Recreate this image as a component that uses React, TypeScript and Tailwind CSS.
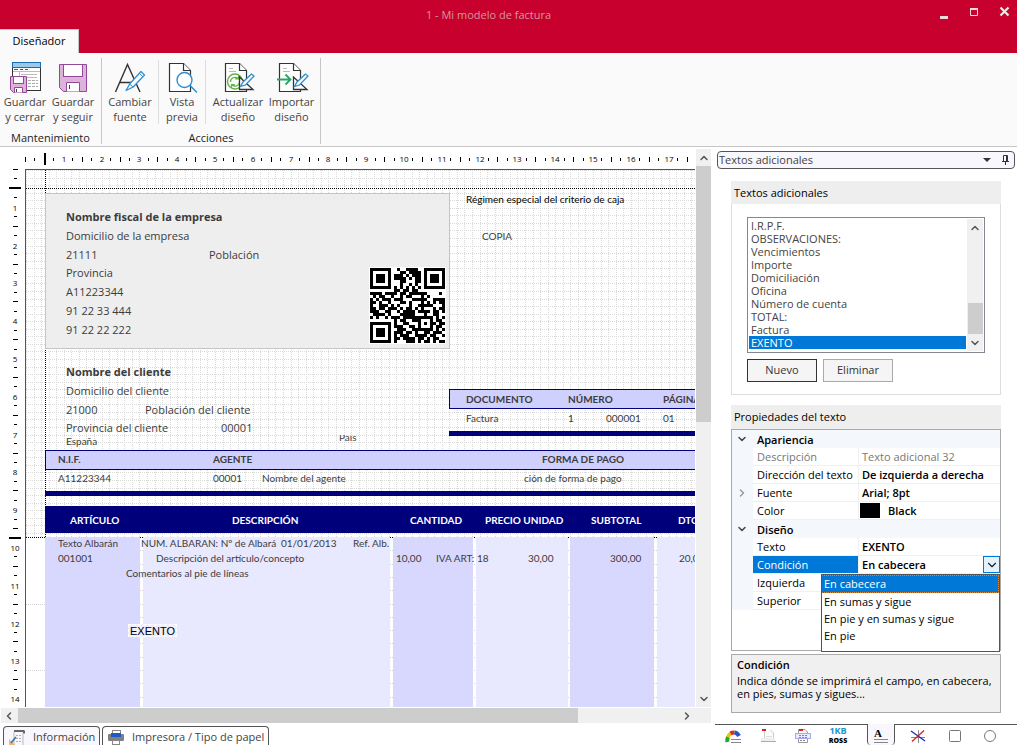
import React, { useState } from "react";
import { ChevronDown, ChevronLeft, ChevronRight, ChevronUp } from "lucide-react";

const CM = 37.8;

/* ---------- Ribbon icons ---------- */

function Pencil() {
  return (
    <g>
      <path d="M28 11.500 17 23.500l-4 7 7.200-3.500L31.500 15z" fill="#fafafa" stroke="#2f8fd0" strokeWidth="1.300" strokeLinejoin="round" />
      <path d="M26.500 13.500 30 17M16.500 24l3.500 3" stroke="#2f8fd0" strokeWidth="1" />
    </g>
  );
}

function SaveCloseIcon() {
  return (
    <svg width="34" height="34" viewBox="0 0 34 34" fill="none">
      <rect x="4.500" y="2.500" width="28" height="28" fill="#fff" stroke="#333" />
      <rect x="4.500" y="2.500" width="28" height="5" fill="#9cc9ea" stroke="#1b6db0" />
      <path d="M6 9.500h4M12 9.500h3M17 9.500h3" stroke="#555" />
      <path d="M5 11.500h27M11.500 12v18M13 14.500h16M13 17.500h16" stroke="#bbb" />
      <path d="M20 20.500h3M24 20.500h3M28 20.500h2M20 23.500h3M24 23.500h3M28 23.500h2M20 26.500h3M24 26.500h3M28 26.500h2" stroke="#aaa" />
      <path d="M2.500 16.500h16v16h-13l-3-3z" fill="#dcb4da" stroke="#96479a" />
      <rect x="5.500" y="16.500" width="10" height="7" fill="#fff" stroke="#96479a" />
      <path d="M6.500 32.500v-5h8v5" fill="#fff" stroke="#96479a" />
      <path d="M8.500 29v3" stroke="#444" />
    </svg>
  );
}

function SaveIcon() {
  return (
    <svg width="34" height="34" viewBox="0 0 34 34" fill="none">
      <path d="M3.500 4.500h27v27h-23l-4-4z" fill="#dcb4da" stroke="#96479a" />
      <rect x="7.500" y="4.500" width="19" height="12" fill="#fff" stroke="#96479a" />
      <path d="M10.500 31.500v-9h13v9" fill="#fff" stroke="#96479a" />
      <path d="M13.500 25v4" stroke="#444" />
    </svg>
  );
}

function FontIcon() {
  return (
    <svg width="34" height="34" viewBox="0 0 34 34" fill="none">
      <path d="M2.500 32 14.500 4.500 27 32M7 22.500h15" stroke="#333" strokeWidth="1.400" />
      <Pencil />
    </svg>
  );
}

function PageShape() {
  return (
    <g>
      <path d="M4.500 3.500h14l7 7v21h-21z" fill="#fff" stroke="#333" strokeWidth="1.200" />
      <path d="M18.500 3.500v7h7" fill="#fff" stroke="#333" strokeWidth="1.200" />
    </g>
  );
}

function PreviewIcon() {
  return (
    <svg width="34" height="34" viewBox="0 0 34 34" fill="none">
      <PageShape />
      <circle cx="19.500" cy="20" r="7.500" fill="#fff" stroke="#2f8fd0" strokeWidth="1.400" />
      <path d="M25 25.500 32 32.500" stroke="#2f8fd0" strokeWidth="1.500" />
    </svg>
  );
}

function SetSquare() {
  return (
    <g>
      <path d="M18.500 17v12.500h13.500z" fill="#fff" stroke="#333" strokeWidth="1.300" />
      <path d="M30.500 14 22 22l-2.500 4.500 5-1.500 8.500-9z" fill="#fafafa" stroke="#2f8fd0" strokeWidth="1.300" />
    </g>
  );
}

function UpdateIcon() {
  return (
    <svg width="34" height="34" viewBox="0 0 34 34" fill="none">
      <PageShape />
      <path d="M8 8.500h4M8 11.500h7" stroke="#bbb" />
      <circle cx="14" cy="21.500" r="7.500" fill="#fff" stroke="#62b345" strokeWidth="1.400" />
      <path d="M9.500 22a4.500 4.500 0 0 1 7.500-3.500M17.500 15.500v3.300h-3.300M18.500 21.500a4.500 4.500 0 0 1-7.500 3.500M10.500 28v-3.300h3.300" stroke="#62b345" strokeWidth="1.200" />
      <SetSquare />
    </svg>
  );
}

function ImportIcon() {
  return (
    <svg width="34" height="34" viewBox="0 0 34 34" fill="none">
      <PageShape />
      <path d="M8 8.500h4M8 11.500h7" stroke="#bbb" />
      <path d="M2 19.500h13M10.500 14.500l5 5-5 5" stroke="#27a566" strokeWidth="1.800" />
      <SetSquare />
    </svg>
  );
}

type RibbonButtonProps = { icon: React.ReactNode; lines: [string, string]; width: string };

function RibbonButton({ icon, lines, width }: RibbonButtonProps) {
  return (
    <button type="button" className={`flex flex-col items-center ${width}`}>
      {icon}
      <span className="text-[11px] leading-[15px] whitespace-nowrap text-[#444]">
        {lines[0]}
        <br />
        {lines[1]}
      </span>
    </button>
  );
}

/* ---------- Title bar and ribbon ---------- */

function TitleBar() {
  return (
    <header className="flex h-[53px] flex-col justify-between bg-[#c8002d]">
      <div className="flex h-7 items-center">
        <div className="w-[76px]" />
        <h1 className="flex-1 pt-[2px] text-center text-[11px] text-[#d29a9c]">1 - Mi modelo de factura</h1>
        <div className="flex w-[116px] items-center justify-end gap-[14px] pr-[5px] pb-[5px]">
          <button type="button" aria-label="Minimizar" className="flex h-4 w-4 items-end justify-center">
            <svg width="10" height="8"><rect x="1" y="4" width="8" height="3" fill="#eadcdc" /></svg>
          </button>
          <button type="button" aria-label="Maximizar" className="flex h-4 w-4 items-center justify-center">
            <svg width="10" height="10"><path d="M1.500 1v7.500h7V1" fill="none" stroke="#eadcdc" /><path d="M1 2h8" stroke="#eadcdc" strokeWidth="2" /></svg>
          </button>
          <button type="button" aria-label="Cerrar" className="flex h-4 w-4 items-center justify-center">
            <svg width="11" height="11"><path d="M1.500 1.500l8 8M9.500 1.500l-8 8" stroke="#f3e6e6" strokeWidth="2.200" /></svg>
          </button>
        </div>
      </div>
      <nav className="flex">
        <button type="button" className="h-6 w-[79px] border-t border-r border-[#c6c6c6] bg-[#fafafa] text-[11px] text-black">Diseñador</button>
      </nav>
    </header>
  );
}

function Ribbon() {
  return (
    <div className="flex h-[94px] items-start border-b border-[#c6c6c6] bg-[#fafafa] pt-[5px]">
      <section className="flex h-[86px] w-[102px] flex-col justify-between border-r border-[#c6c6c6]">
        <div className="flex pt-[2px] pl-[1px]">
          <RibbonButton icon={<SaveCloseIcon />} lines={["Guardar", "y cerrar"]} width="w-12" />
          <RibbonButton icon={<SaveIcon />} lines={["Guardar", "y seguir"]} width="w-12" />
        </div>
        <h2 className="text-center text-[11px] leading-[13px] text-[#222]">Mantenimiento</h2>
      </section>
      <section className="flex h-[86px] w-[219px] flex-col justify-between border-r border-[#c6c6c6]">
        <div className="flex pt-[2px]">
          <div className="flex w-[57px] justify-center border-r border-[#ddd]">
            <RibbonButton icon={<FontIcon />} lines={["Cambiar", "fuente"]} width="w-14" />
          </div>
          <div className="flex w-[47px] justify-center border-r border-[#ddd]">
            <RibbonButton icon={<PreviewIcon />} lines={["Vista", "previa"]} width="w-11" />
          </div>
          <div className="flex pl-1">
            <RibbonButton icon={<UpdateIcon />} lines={["Actualizar", "diseño"]} width="w-14" />
            <RibbonButton icon={<ImportIcon />} lines={["Importar", "diseño"]} width="w-[51px]" />
          </div>
        </div>
        <h2 className="text-center text-[11px] leading-[13px] text-[#222]">Acciones</h2>
      </section>
    </div>
  );
}

/* ---------- Rulers ---------- */

const columnTicks = Array.from({ length: 71 }, (_, i) => i);
const rowTicks = Array.from({ length: 57 }, (_, i) => i);

function HorizontalRuler() {
  return (
    <svg width="100%" height="22" className="block" aria-hidden="true">
      {columnTicks.map((i) => {
        const x = Math.round(26 + i * (CM / 4));
        if (i === 2) return <rect key={i} x={x - 1} y="6" width="2" height="12" fill="#000" />;
        if (i && i % 4 === 0)
          return (
            <text key={i} x={x} y="15" textAnchor="middle" fontSize="8" fill="#000">{i / 4}</text>
          );
        return i % 2 ? <rect key={i} x={x - 1} y="11" width="1" height="3" fill="#000" /> : <rect key={i} x={x - 1} y="10" width="1" height="5" fill="#000" />;
      })}
    </svg>
  );
}

function VerticalRuler() {
  return (
    <svg width="25" height="100%" className="absolute inset-0" aria-hidden="true">
      {rowTicks.map((i) => {
        const y = Math.round(i * (CM / 4));
        if (i === 2 || i === 39) return <rect key={i} x="9" y={y - 1} width="12" height="2" fill="#000" />;
        if (i && i % 4 === 0)
          return (
            <text key={i} x="15" y={y + 4} textAnchor="middle" fontSize="8" fill="#000">{i / 4}</text>
          );
        return i % 2 ? <rect key={i} x="14" y={y} width="3" height="1" fill="#000" /> : <rect key={i} x="13" y={y} width="5" height="1" fill="#000" />;
      })}
    </svg>
  );
}

/* ---------- Design canvas ---------- */

function CanvasGrid() {
  const vertical = Array.from({ length: 240 }, (_, k) => Math.round(k * (CM / 5)) + 0.5);
  const horizontal = Array.from({ length: 49 }, (_, k) => Math.round(k * (CM / 5)) + 0.5);
  const rows = Array.from({ length: 30 }, (_, k) => Math.round(367 + 13.3 * k) + 0.5);
  return (
    <svg width="100%" height="100%" className="absolute inset-0" shapeRendering="crispEdges" aria-hidden="true">
      {vertical.map((x) => <line key={x} x1={x} x2={x} y1="0" y2="367" stroke="#d9d9d9" strokeDasharray="1 1" />)}
      {horizontal.map((y) => <line key={y} x1="0" x2="100%" y1={y} y2={y} stroke="#d9d9d9" strokeDasharray="1 1" />)}
      {rows.map((y, k) => <line key={y} x1={k % 5 === 0 ? 0 : 20} x2="100%" y1={y} y2={y} stroke="#d4d4d4" strokeDasharray="1 1" />)}
      <line x1="19.500" x2="19.500" y1="0" y2="367" stroke="#000" strokeDasharray="1 1" />
      <line x1="0" x2="100%" y1="18.500" y2="18.500" stroke="#000" strokeDasharray="1 1" />
      <line x1="0" x2="100%" y1="367.500" y2="367.500" stroke="#000" strokeDasharray="1 1" />
    </svg>
  );
}

const QR = [
  "1111111001001111001111111",
  "1000001000110111101000001",
  "1011101011101011101011101",
  "1011101011110101101011101",
  "1011101000110001101011101",
  "1000001000100101001000001",
  "1111111010101010101111111",
  "0000000011011011000000000",
  "1111011110110111111000010",
  "0101100100101100010100000",
  "1010111011100011111001111",
  "1101001000110100010101011",
  "1001110101000100111110001",
  "1101101110101101010001011",
  "1110011001011110111101101",
  "0111101000111110001001100",
  "1010010111011111111110101",
  "0000000010110011100010110",
  "1111111010011000101011011",
  "1000001011100110100010110",
  "1011101001110011111110101",
  "1011101011101101001101110",
  "1011101010111001111011001",
  "1000001011011110110101100",
  "1111111010001110101101011",
];

function QrCode() {
  return (
    <svg className="absolute top-[97px] left-[343px]" width="77" height="77" viewBox="0 0 77 77" shapeRendering="crispEdges" role="img" aria-label="Código QR">
      <rect width="77" height="77" fill="#fff" />
      {QR.flatMap((row, y) =>
        row.split("").map((c, x) => (c === "1" ? <rect key={`${x}-${y}`} x={x * 3 + 1} y={y * 3 + 1} width="3" height="3" fill="#000" /> : null)),
      )}
    </svg>
  );
}

type Label = { t: string; x: number; y: number };

const addressTitles: Label[] = [
  { t: "Nombre fiscal de la empresa", x: 40, y: 39 },
  { t: "Nombre del cliente", x: 40, y: 194 },
];

const addressLabels: Label[] = [
  { t: "Domicilio de la empresa", x: 40, y: 58 },
  { t: "21111", x: 40, y: 77 },
  { t: "Población", x: 183, y: 77 },
  { t: "Provincia", x: 40, y: 95 },
  { t: "A11223344", x: 40, y: 114 },
  { t: "91 22 33 444", x: 40, y: 133 },
  { t: "91 22 22 222", x: 40, y: 152 },
  { t: "Domicilio del cliente", x: 40, y: 213 },
  { t: "21000", x: 40, y: 232 },
  { t: "Población del cliente", x: 119, y: 232 },
  { t: "Provincia del cliente", x: 40, y: 250 },
  { t: "00001", x: 195, y: 250 },
];

const smallLabels: Label[] = [
  { t: "COPIA", x: 456, y: 58 },
  { t: "España", x: 40, y: 263 },
  { t: "Factura", x: 440, y: 240 },
  { t: "1", x: 542, y: 240 },
  { t: "000001", x: 580, y: 240 },
  { t: "01", x: 637, y: 240 },
  { t: "A11223344", x: 32, y: 300 },
  { t: "00001", x: 187, y: 300 },
  { t: "Nombre del agente", x: 236, y: 300 },
  { t: "ción de forma de pago", x: 498, y: 300 },
  { t: "Texto Albarán", x: 32, y: 365 },
  { t: "NUM. ALBARAN: Nº de Albará", x: 115, y: 365 },
  { t: "01/01/2013", x: 255, y: 365 },
  { t: "Ref. Alb.", x: 327, y: 365 },
  { t: "001001", x: 32, y: 380 },
  { t: "Descripción del artículo/concepto", x: 130, y: 380 },
  { t: "10,00", x: 370, y: 380 },
  { t: "IVA ART:", x: 410, y: 380 },
  { t: "18", x: 451, y: 380 },
  { t: "30,00", x: 502, y: 380 },
  { t: "300,00", x: 584, y: 380 },
  { t: "20,00", x: 653, y: 380 },
  { t: "Comentarios al pie de líneas", x: 100, y: 395 },
];

const boldLabels: Label[] = [
  { t: "DOCUMENTO", x: 440, y: 221 },
  { t: "NÚMERO", x: 542, y: 221 },
  { t: "PÁGINA", x: 637, y: 221 },
  { t: "N.I.F.", x: 32, y: 281 },
  { t: "AGENTE", x: 187, y: 281 },
  { t: "FORMA DE PAGO", x: 516, y: 281 },
];

const headerLabels: Label[] = [
  { t: "ARTÍCULO", x: 44, y: 342 },
  { t: "DESCRIPCIÓN", x: 206, y: 342 },
  { t: "CANTIDAD", x: 384, y: 342 },
  { t: "PRECIO UNIDAD", x: 459, y: 342 },
  { t: "SUBTOTAL", x: 565, y: 342 },
  { t: "DTO.", x: 652, y: 342 },
];

function Labels({ items, className }: { items: Label[]; className: string }) {
  return (
    <>
      {items.map((l) => (
        <span key={`${l.t}${l.x}${l.y}`} className={`absolute leading-4 whitespace-nowrap ${className}`} style={{ left: l.x, top: l.y }}>
          {l.t}
        </span>
      ))}
    </>
  );
}

function Canvas() {
  return (
    <div className="relative min-w-0 flex-1 overflow-hidden border-t border-l border-[#555] bg-white">
      <CanvasGrid />
      <div className="absolute top-[23px] left-[19px] h-[156px] w-[405px] border border-[#c4c4c4] bg-[#eee]" />
      <QrCode />
      <div className="absolute top-[219px] right-0 left-[423px] h-5 border border-r-0 border-[#00007b] bg-[#d0d0ff]" />
      <div className="absolute top-[261px] right-0 left-[423px] h-[5px] bg-[#00007b]" />
      <div className="absolute top-[280px] right-0 left-[19px] h-5 border border-r-0 border-[#00007b] bg-[#d0d0ff]" />
      <div className="absolute top-[321px] right-0 left-[19px] h-[5px] bg-[#00007b]" />
      <div className="absolute top-[336px] right-0 left-[19px] h-[27px] bg-[#00007b]" />
      <div className="absolute top-[367px] bottom-0 left-[19px] w-[95px] bg-[#d8d8ff]" />
      <div className="absolute top-[367px] bottom-0 left-[117px] w-[247px] bg-[#e8e8ff]" />
      <div className="absolute top-[367px] bottom-0 left-[367px] w-[80px] bg-[#d8d8ff]" />
      <div className="absolute top-[367px] bottom-0 left-[450px] w-[92px] bg-[#e8e8ff]" />
      <div className="absolute top-[367px] bottom-0 left-[544px] w-[84px] bg-[#d8d8ff]" />
      <div className="absolute top-[367px] right-0 bottom-0 left-[631px] bg-[#e8e8ff]" />
      <Labels items={addressTitles} className="text-[11px] font-bold text-[#3c3c3c]" />
      <Labels items={addressLabels} className="text-[11px] text-[#3c3c3c]" />
      <Labels items={[{ t: "Régimen especial del criterio de caja", x: 440, y: 21 }]} className="font-['Lato',sans-serif] text-[10px] text-black" />
      <Labels items={smallLabels} className="font-['Lato',sans-serif] text-[10px] text-[#3c3c3c]" />
      <Labels items={boldLabels} className="font-['Lato',sans-serif] text-[10px] font-bold text-[#3c3c3c]" />
      <Labels items={headerLabels} className="font-['Lato',sans-serif] text-[10px] font-bold text-white" />
      <div className="absolute top-[265px] left-[313px] flex h-2 items-end overflow-hidden font-['Lato',sans-serif] text-[10px] leading-[11px] text-[#444]">País</div>
      <div className="absolute top-[454px] left-[102px] h-[13px] border border-dashed border-white bg-[#efefff] px-px font-['Liberation_Sans',sans-serif] text-[11px] leading-3 text-black">EXENTO</div>
    </div>
  );
}

function ScrollButton({ label, children }: { label: string; children: React.ReactNode }) {
  return (
    <button type="button" aria-label={label} className="flex h-[17px] w-[15px] shrink-0 items-center justify-center text-[#555]">
      {children}
    </button>
  );
}

function Designer() {
  return (
    <main className="flex min-w-0 flex-1 flex-col">
      <div className="flex min-h-0 flex-1">
        <div className="flex min-w-0 flex-1 flex-col">
          <HorizontalRuler />
          <div className="flex flex-1">
            <div className="relative w-[25px] shrink-0 overflow-hidden"><VerticalRuler /></div>
            <Canvas />
          </div>
        </div>
        <div className="ml-px mt-[2px] flex w-[15px] flex-col bg-[#f0f0f0]">
          <ScrollButton label="Subir"><ChevronUp size={12} strokeWidth={3} /></ScrollButton>
          <div className="h-[256px] bg-[#cdcdcd]" />
          <div className="flex-1" />
          <ScrollButton label="Bajar"><ChevronDown size={12} strokeWidth={3} /></ScrollButton>
        </div>
      </div>
      <div className="mt-px ml-px flex h-[15px] items-center bg-[#f0f0f0]">
        <ScrollButton label="Izquierda"><ChevronLeft size={12} strokeWidth={3} /></ScrollButton>
        <div className="ml-[2px] h-full w-[560px] bg-[#cdcdcd]" />
        <div className="flex-1" />
        <ScrollButton label="Derecha"><ChevronRight size={12} strokeWidth={3} /></ScrollButton>
        <div className="w-[17px]" />
      </div>
      <div className="mt-[3px] flex h-[19px] gap-[2px] pl-[3px] text-[11px] text-[#444]">
        <button type="button" className="flex w-[97px] items-center gap-2 rounded-t-sm border border-b-0 border-[#555] bg-[#f7f7fd] pt-[2px] pl-[5px]">
          <svg width="16" height="16" viewBox="0 0 16 16" fill="none" className="shrink-0">
            <path d="M5 2h10M15 1.500v3" stroke="#666" strokeWidth="2" />
            <path d="M5 3v13M14 4v12" stroke="#bbb" />
            <path d="M7 6.500h5M7 9.500h5M7 12.500h5" stroke="#b0b0b0" strokeDasharray="2 1" />
            <path d="M0 10v6h6z" fill="#f2b866" />
            <path d="M2 14 7 8" stroke="#2f6fb0" strokeWidth="1.500" />
          </svg>
          Información
        </button>
        <button type="button" className="flex w-[167px] items-center gap-2 rounded-t-sm border border-b-0 border-[#555] bg-white pt-[2px] pl-[5px]">
          <svg width="16" height="16" viewBox="0 0 16 16" className="shrink-0">
            <rect x="4.500" y="1.500" width="8" height="3" fill="#fff" stroke="#888" />
            <rect x="0" y="5" width="16" height="7" rx="1" fill="#808080" />
            <rect x="3" y="4" width="10" height="4" fill="#2456c8" />
            <rect x="4.500" y="11.500" width="7" height="4" fill="#fff" stroke="#888" />
          </svg>
          Impresora / Tipo de papel
        </button>
      </div>
    </main>
  );
}

/* ---------- Side panel ---------- */

const textItems = ["I.R.P.F.", "OBSERVACIONES:", "Vencimientos", "Importe", "Domiciliación", "Oficina", "Número de cuenta", "TOTAL:", "Factura", "EXENTO"];

function TextList() {
  const [selected, setSelected] = useState("EXENTO");
  return (
    <section>
      <h3 className="h-[23px] bg-[#eee] pl-[3px] text-[11px] leading-[23px] text-black">Textos adicionales</h3>
      <div className="border border-t-0 border-[#ddd] px-[15px] pt-[13px] pb-[12px]">
        <div className="flex h-[136px] border border-[#828790] bg-white">
          <ul role="listbox" aria-label="Textos adicionales" className="flex-1 pt-px pl-px">
            {textItems.map((t) => (
              <li
                key={t}
                role="option"
                aria-selected={t === selected}
                onClick={() => setSelected(t)}
                className={t === selected ? "h-[13px] bg-[#0078d7] pl-[2px] text-[11px] leading-[13px] text-white" : "h-[13px] pl-[2px] text-[11px] leading-[13px] text-[#444]"}
              >
                {t}
              </li>
            ))}
          </ul>
          <div className="my-px mr-px ml-px flex w-4 flex-col items-center bg-[#f0f0f0]">
            <ScrollButton label="Subir lista"><ChevronUp size={12} strokeWidth={3} /></ScrollButton>
            <div className="flex-1" />
            <div className="h-[31px] w-[15px] bg-[#cdcdcd]" />
            <ScrollButton label="Bajar lista"><ChevronDown size={12} strokeWidth={3} /></ScrollButton>
          </div>
        </div>
        <div className="mt-[6px] flex gap-[6px] text-[11px] text-[#333]">
          <button type="button" className="h-[23px] w-[70px] border border-[#333] bg-[#f5f5f5]">Nuevo</button>
          <button type="button" className="h-[23px] w-[70px] border border-[#aaa] bg-[#f5f5f5]">Eliminar</button>
        </div>
      </div>
    </section>
  );
}

function CategoryRow({ title }: { title: string }) {
  return (
    <tr className="h-[18px] bg-[#f4f7fc]">
      <td className="p-0 pl-1"><ChevronDown size={12} strokeWidth={3} className="text-[#444]" /></td>
      <th colSpan={2} scope="colgroup" className="p-0 pl-1 text-left font-semibold">{title}</th>
    </tr>
  );
}

type PropertyRowProps = { name: string; value?: React.ReactNode; muted?: boolean; active?: boolean; expandable?: boolean };

function PropertyRow({ name, value, muted, active, expandable }: PropertyRowProps) {
  return (
    <tr className="h-[18px]">
      <td className="bg-[#f4f7fc] p-0 pl-1">{expandable && <ChevronRight size={12} strokeWidth={3} className="text-[#999]" />}</td>
      <th
        scope="row"
        className={
          active
            ? "border-b border-[#f0f0f0] bg-[#0078d7] p-0 pl-1 text-left font-normal text-white"
            : muted
              ? "border-b border-[#f0f0f0] p-0 pl-1 text-left font-normal text-[#777]"
              : "border-b border-[#f0f0f0] p-0 pl-1 text-left font-normal"
        }
      >
        {name}
      </th>
      <td className={muted ? "border-b border-l border-[#f0f0f0] p-0 pl-[3px] text-[#777]" : "border-b border-l border-[#f0f0f0] p-0 pl-[3px] font-semibold"}>{value}</td>
    </tr>
  );
}

const conditions = ["En cabecera", "En sumas y sigue", "En pie y en sumas y sigue", "En pie"];

function ConditionPicker() {
  const [value, setValue] = useState(conditions[0]);
  const [open, setOpen] = useState(true);
  return (
    <div className="relative flex h-[17px] items-center">
      <span className="flex-1">{value}</span>
      <button
        type="button"
        aria-label="Abrir lista de condiciones"
        aria-haspopup="listbox"
        aria-expanded={open}
        onClick={() => setOpen(!open)}
        className="flex h-[17px] w-[17px] items-center justify-center border border-[#0078d7] bg-[#e5f1fb] text-[#222]"
      >
        <ChevronDown size={14} strokeWidth={2} />
      </button>
      {open && (
        <ul role="listbox" aria-label="Condición" className="absolute top-[18px] right-0 z-10 h-[78px] w-[179px] border border-[#555] bg-white font-normal">
          {conditions.map((c) => (
            <li
              key={c}
              role="option"
              aria-selected={c === value}
              onClick={() => {
                setValue(c);
                setOpen(false);
              }}
              className={c === value ? "h-[18px] border border-dotted border-[#d7873c] border-l-transparent bg-[#0078d7] pl-px leading-4 text-white" : "h-[17px] pl-[2px] leading-[17px] text-black"}
            >
              {c}
            </li>
          ))}
        </ul>
      )}
    </div>
  );
}

function Properties() {
  return (
    <section className="mt-[10px]">
      <h3 className="h-6 bg-[#eee] pl-[3px] text-[11px] leading-[23px] text-black">Propiedades del texto</h3>
      <div className="h-[222px] border border-[#aaa] bg-white">
        <table className="w-full table-fixed border-separate border-spacing-0 text-[11px] leading-[17px] whitespace-nowrap text-black">
          <colgroup>
            <col className="w-[21px]" />
            <col className="w-[105px]" />
            <col />
          </colgroup>
          <tbody>
            <CategoryRow title="Apariencia" />
            <PropertyRow name="Descripción" value="Texto adicional 32" muted />
            <PropertyRow name="Dirección del texto" value="De izquierda a derecha" />
            <PropertyRow name="Fuente" value="Arial; 8pt" expandable />
            <PropertyRow
              name="Color"
              value={
                <span className="flex h-[17px] items-center gap-2">
                  <span className="-ml-[2px] h-[15px] w-5 bg-black" />
                  Black
                </span>
              }
            />
            <CategoryRow title="Diseño" />
            <PropertyRow name="Texto" value="EXENTO" />
            <PropertyRow name="Condición" value={<ConditionPicker />} active />
            <PropertyRow name="Izquierda" />
            <PropertyRow name="Superior" />
          </tbody>
        </table>
      </div>
      <div className="mt-[3px] h-[59px] border border-[#aaa] bg-[#f0f0f0] px-[5px] pt-[2px] text-[11px] leading-[13px] text-black">
        <h4 className="leading-[15px] font-semibold">Condición</h4>
        <p className="mt-[2px]">Indica dónde se imprimirá el campo, en cabecera, en pies, sumas y sigues...</p>
      </div>
    </section>
  );
}

function ToolTabs() {
  const plain = "flex h-[21px] w-[35px] items-center justify-center border-t border-[#555] pt-px";
  return (
    <div className="mt-auto ml-1 flex h-[21px]">
      <button type="button" aria-label="Imágenes" className={plain}>
        <svg width="16" height="16" viewBox="0 0 16 16" fill="none" strokeWidth="4">
          <path d="M2.500 14A6.500 6.500 0 0 1 3.200 9" stroke="#22a63c" />
          <path d="M3.200 9A6.500 6.500 0 0 1 5.500 5.500" stroke="#f4c400" />
          <path d="M5.500 5.500A6.500 6.500 0 0 1 9.500 4.500" stroke="#e02b20" />
          <path d="M9.500 4.500A6.500 6.500 0 0 1 14 8" stroke="#2456c8" />
          <path d="M6 11.500h10M6 14.500h10" stroke="#888" strokeWidth="1" />
        </svg>
      </button>
      <button type="button" aria-label="Cabecera" className={plain}>
        <svg width="16" height="16" viewBox="0 0 16 16" fill="none">
          <path d="M4.500 3v9h9V5l-3-3" fill="#fafafa" stroke="#ccc" />
          <path d="M2 2h4" stroke="#d22" strokeWidth="2" />
          <path d="M6 8.500h6" stroke="#ddd" />
          <rect x="1" y="10" width="14" height="3" fill="#eee" />
          <path d="M1 13.500h15" stroke="#7fb4e6" />
        </svg>
      </button>
      <button type="button" aria-label="Pie" className={plain}>
        <svg width="16" height="16" viewBox="0 0 16 16" fill="none">
          <path d="M3.500 1.500v13h9V4l-2.500-2.500z" fill="#fff" stroke="#999" />
          <path d="M4 2h4" stroke="#d22" strokeWidth="2" />
          <rect x="0.500" y="5.500" width="15" height="5" fill="#e8e8ff" stroke="#a9a9ee" />
          <path d="M4 7.500h8M4 9.500h8M5 12.500h6" stroke="#888" strokeDasharray="2 1" />
        </svg>
      </button>
      <button type="button" aria-label="Logotipo" className="flex h-[21px] w-[47px] flex-col items-center justify-end border-t border-[#555] pr-[11px]">
        <span className="text-[9px] leading-[10px] font-bold text-[#1597cf]">1KB</span>
        <span className="text-[7px] leading-[9px] font-extrabold text-black">ROSS</span>
      </button>
      <button type="button" aria-label="Textos adicionales" aria-pressed="true" className="flex h-[21px] w-7 items-center justify-center rounded-b-sm border-x border-[#555] bg-[#f7f7fd]">
        <svg width="16" height="18" viewBox="0 0 16 18" fill="none">
          <text x="1" y="11" fontSize="11" fontWeight="bold" fontFamily="Liberation Serif, serif" fill="#000">A</text>
          <path d="M1 13.500h14M1 16.500h14" stroke="#888" />
        </svg>
      </button>
      <button type="button" aria-label="Líneas" className="flex h-[21px] w-[42px] items-center justify-center border-t border-[#555] pt-px pl-[3px]">
        <svg width="16" height="16" viewBox="0 0 16 16" fill="none">
          <path d="M8.500 2v13M1 9.500h14" stroke="#888" />
          <path d="M1 3l14 10" stroke="#2222c8" strokeWidth="1.300" />
          <path d="M14 2.500 2 13.500" stroke="#d22020" strokeWidth="1.300" />
        </svg>
      </button>
      <button type="button" aria-label="Rectángulos" className={plain}>
        <svg width="14" height="14" viewBox="0 0 14 14"><rect x="1.500" y="1.500" width="11" height="11" rx="1" fill="#fff" stroke="#777" /></svg>
      </button>
      <button type="button" aria-label="Círculos" className={plain}>
        <svg width="14" height="14" viewBox="0 0 14 14"><circle cx="7" cy="7" r="5.500" fill="#fff" stroke="#777" /></svg>
      </button>
      <div className="flex-1 border-t border-[#555]" />
    </div>
  );
}

function SidePanel() {
  return (
    <aside className="flex w-[306px] shrink-0 flex-col bg-white">
      <div className="mt-1 mr-[2px] ml-[6px] flex h-[18px] items-center rounded-sm border border-[#555] bg-[#f7f7fd] pr-1">
        <h2 className="flex-1 pl-px text-[11px] text-[#444]">Textos adicionales</h2>
        <button type="button" aria-label="Opciones del panel" className="mr-2 flex h-4 w-3 items-center justify-center">
          <svg width="8" height="4"><path d="M0 0h8L4 4z" fill="#333" /></svg>
        </button>
        <button type="button" aria-label="Fijar panel" className="flex h-4 w-[9px] items-center justify-center">
          <svg width="9" height="10" fill="none"><path d="M2.500 6V.5h4V6M5.500.5V6M1 6.500h7M4.500 7v3" stroke="#333" /></svg>
        </button>
      </div>
      <div className="mt-3 mr-4 ml-5">
        <TextList />
        <Properties />
      </div>
      <ToolTabs />
    </aside>
  );
}

export default function App() {
  return (
    <div className="flex min-h-screen flex-col bg-white font-['Open_Sans','Noto_Sans',sans-serif]">
      <TitleBar />
      <Ribbon />
      <div className="flex flex-1">
        <Designer />
        <SidePanel />
      </div>
    </div>
  );
}
